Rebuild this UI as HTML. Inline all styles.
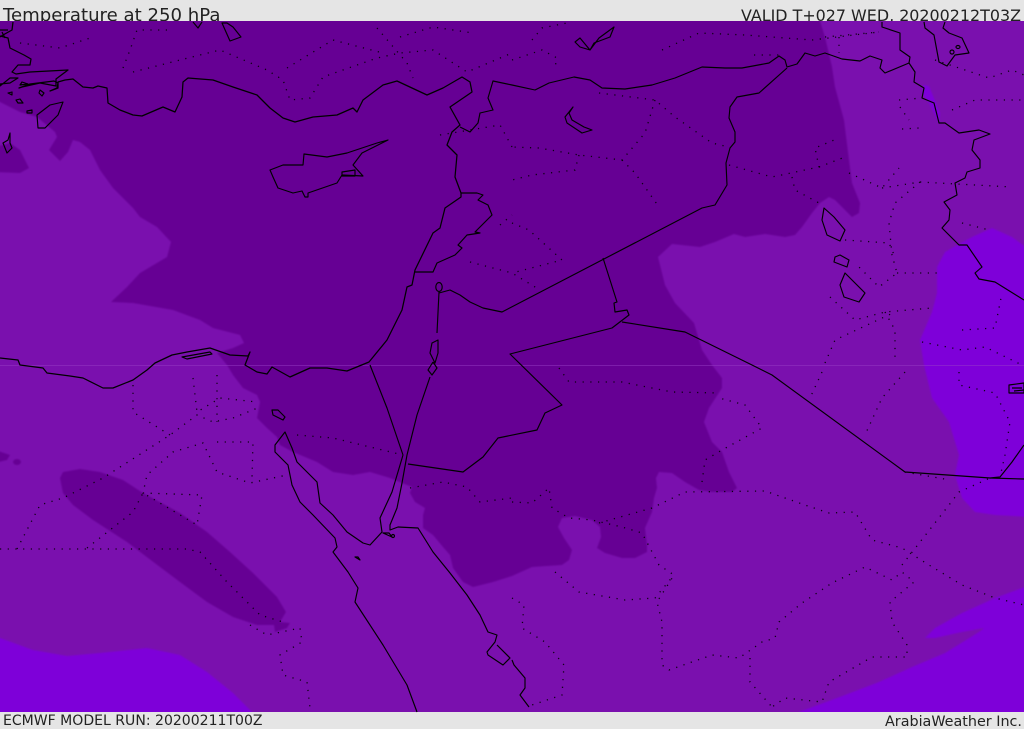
<!DOCTYPE html>
<html><head><meta charset="utf-8"><title>Temperature at 250 hPa</title>
<style>html,body{margin:0;padding:0;background:#e5e5e5;width:1024px;height:729px;overflow:hidden}svg{display:block}</style></head>
<body>
<svg width="1024" height="729" viewBox="0 0 1024 729" xmlns="http://www.w3.org/2000/svg" font-family="'DejaVu Sans',sans-serif" fill="#222">
<defs>
<clipPath id="m"><rect x="0" y="21" width="1024" height="691"/></clipPath>
<filter id="s" x="-2%" y="-2%" width="104%" height="104%"><feGaussianBlur stdDeviation="0.9"/></filter>
</defs>
<rect width="1024" height="729" fill="#e5e5e5"/>
<text x="3" y="21" font-size="18" textLength="217.5" lengthAdjust="spacingAndGlyphs">Temperature at 250 hPa</text>
<text x="741" y="21" font-size="16" textLength="280" lengthAdjust="spacingAndGlyphs">VALID T+027 WED, 20200212T03Z</text>
<text x="3" y="725" font-size="14" textLength="259.5" lengthAdjust="spacingAndGlyphs">ECMWF MODEL RUN: 20200211T00Z</text>
<text x="885" y="726" font-size="14" textLength="137" lengthAdjust="spacingAndGlyphs">ArabiaWeather Inc.</text>

<rect x="0" y="21" width="1024" height="691" fill="#7a10ae"/>
<g clip-path="url(#m)"><g filter="url(#s)">
<!-- dark contour -->
<path fill="#660094" stroke-linejoin="round" d="M-5,10 L820,10 820,21 825,37 832,67 835,87 844,120 849,160 852,183 860,203 859,213 852,217 845,210 835,200 829,197 820,203 812,213 802,227 795,235 785,237 765,234 745,237 734,234 715,242 700,247 672,244 658,257 665,285 675,303 694,323 702,350 712,365 722,378 722,388 709,408 704,422 712,442 722,452 729,472 737,488 732,492 712,492 699,490 685,482 672,473 659,472 656,478 657,488 654,498 652,512 645,528 647,545 647,552 635,558 622,558 605,553 597,548 601,537 600,527 592,520 575,516 562,518 558,527 564,538 572,550 569,560 562,565 532,567 512,576 493,582 473,587 463,582 453,568 450,555 443,547 433,535 423,528 423,515 425,508 415,502 410,493 412,487 402,483 390,478 370,472 353,475 333,472 317,462 293,452 280,445 277,437 267,428 257,418 260,402 257,395 243,388 233,375 227,365 217,353 233,348 244,343 240,335 213,328 200,320 173,310 133,303 111,302 127,287 140,273 167,257 171,242 157,227 140,217 133,208 113,188 100,170 90,150 80,142 73,140 68,152 60,161 49,150 57,137 55,132 37,117 20,112 0,102 -5,100 Z"/>
<path fill="#660094" d="M-5,172 L20,173 29,168 20,150 10,143 -5,147 Z"/>
<path fill="#660094" d="M60,478 63,472 80,469 100,472 123,480 143,493 180,513 207,532 230,552 253,573 277,597 286,612 280,622 290,623 287,628 275,632 274,625 257,625 233,617 207,602 180,582 160,567 127,542 93,520 73,505 63,493 Z"/>
<path fill="#660094" d="M-5,450 10,455 7,460 -5,463 Z"/>
<ellipse cx="17" cy="462" rx="4" ry="3" fill="#660094"/>
<!-- bright contours -->
<path fill="#7e00d9" d="M-5,636 0,638 33,650 67,656 100,653 147,648 180,655 207,672 233,693 252,712 252,720 -5,720 Z"/>
<path fill="#7e00d9" d="M799,712 845,695 879,682 912,667 945,653 979,632 984,628 962,632 935,638 925,638 935,628 962,613 995,598 1030,585 1030,720 799,720 Z"/>
<path fill="#7e00d9" d="M992,228 972,237 945,252 937,267 937,293 932,312 920,340 924,365 932,398 949,422 959,455 955,475 962,498 975,512 995,515 1030,517 1030,250 1012,237 Z"/>
<path fill="#7e00d9" d="M924,85 929,86 940,113 939,123 929,103 922,93 Z"/>
</g></g>
<line x1="0" y1="365.5" x2="1024" y2="365.5" stroke="#9a40c8" stroke-opacity=".45"/>

<!-- dotted regional borders -->
<g fill="none" stroke="#000" stroke-width="1.3" stroke-dasharray="1.2 6.5" stroke-opacity=".9">
<path d="M512,502 532,503 549,488 552,508 569,518 592,520 622,527 642,533 659,565 674,575 657,602 662,622 662,665 669,670 712,655 739,658 762,642 775,638 779,622 802,603 832,583 865,567 892,580 902,572 914,582 890,602 892,622 907,645 907,657 872,657 829,682 822,702 785,698 772,707"/>
<path d="M750,658 750,682 772,707"/>
<path d="M599,523 652,508 685,492 765,491 805,505 829,513 855,512 872,540 902,548 929,565 962,585 995,598 1024,605"/>
<path d="M902,565 949,505 959,492 990,478"/>
<path d="M555,572 579,592 625,600 655,598 674,575"/>
<path d="M512,598 524,605 522,628 545,642 564,665 562,695 532,705"/>
<path d="M702,482 705,460 722,450 762,428 745,405 719,398"/>
<path d="M559,368 569,382 622,382 672,392 719,393"/>
<path d="M822,372 810,398"/>
<path d="M905,372 882,398 865,435"/>
<path d="M959,372 959,385 995,393 1010,422 1005,455 1000,477"/>
<path d="M0,549 187,549 200,552 227,582 260,615 283,622"/>
<path d="M17,549 40,505 63,498 103,478 170,435 197,415 213,422 233,418 260,407"/>
<path d="M87,548 133,512 143,493 197,525 202,495 143,493 147,475 173,452 203,443 217,472 250,483 287,475"/>
<path d="M217,442 253,442 252,478"/>
<path d="M133,385 133,412 170,435"/>
<path d="M193,378 197,412 220,398 257,402"/>
<path d="M217,375 217,422"/>
<path d="M250,625 267,635 300,628 302,642 280,655 283,675 307,682 310,708"/>
<path d="M297,435 333,438 403,455"/>
<path d="M410,488 443,482 467,487 480,502 512,498"/>
<path d="M20,43 60,48 90,38"/>
<path d="M123,68 130,50 137,30 173,30"/>
<path d="M133,72 180,60 220,50 267,70 283,80 290,100 310,98 323,77 377,58 400,53 433,50 467,72 512,53"/>
<path d="M287,68 333,40 383,53"/>
<path d="M377,28 407,63 413,78"/>
<path d="M400,37 433,27 473,33"/>
<path d="M512,60 542,50 557,58 555,67"/>
<path d="M532,40 542,28 572,22"/>
<path d="M662,50 699,33 745,35 812,40 879,32"/>
<path d="M754,55 779,55"/>
<path d="M599,93 655,100 675,117 712,143 729,147"/>
<path d="M655,100 645,133 622,160 579,155 539,148 512,147"/>
<path d="M622,160 635,173 659,207"/>
<path d="M579,155 575,170 532,175 512,180"/>
<path d="M729,165 772,177 819,167 815,148 839,138"/>
<path d="M819,167 845,157"/>
<path d="M792,177 795,190 819,203"/>
<path d="M512,223 529,230 562,260 512,273"/>
<path d="M440,135 500,125 512,147"/>
<path d="M500,225 512,215"/>
<path d="M470,262 512,273 540,290"/>
<path d="M825,37 879,32"/>
<path d="M839,37 839,53"/>
<path d="M899,100 922,98"/>
<path d="M902,129 919,128"/>
<path d="M900,107 909,120"/>
<path d="M952,110 975,100 1024,100"/>
<path d="M935,60 989,78 1012,70 1024,75"/>
<path d="M849,173 882,188 899,168"/>
<path d="M882,188 920,182 1012,187"/>
<path d="M920,182 895,203 889,223 892,255 897,273 879,287 859,267"/>
<path d="M897,273 942,273"/>
<path d="M962,223 989,230"/>
<path d="M830,297 855,320 885,312 932,308"/>
<path d="M885,312 895,330 895,363"/>
<path d="M845,240 889,243 895,257"/>
<path d="M922,342 962,350 985,347 1022,365"/>
<path d="M962,330 995,328 1002,293"/>
<path d="M825,363 835,340 895,312"/>
<path d="M905,472 950,480"/>
</g>

<!-- solid coasts & borders -->
<g fill="none" stroke="#000" stroke-width="1.15" stroke-linejoin="round">
<path stroke-width="1.25" d="M13,22 12,30 3,35 0,37 M0,36 8,38 10,48 18,52 24,55 31,59 30,65 18,65 12,72 16,74 30,72 68,70 60,76 56,79 56,86 40,83 22,87 19,88 30,84 54,81 58,83 57,88 50,91 58,88 58,82 65,80 73,79 83,87 93,88 98,86 107,88 108,103 120,110 133,115 142,116 163,107 175,112 182,97 183,82 188,78 213,80 233,87 257,95 270,108 283,118 295,122 313,117 337,115 353,108 357,112 363,100 383,85 397,81 427,95 443,88 462,77 470,82 472,92 450,107 460,125 452,132 447,145 457,155 455,177 461,193 461,197 445,208 440,228 433,233 415,270 412,285 407,287 402,310 387,340 369,362 347,371 327,368 310,368 290,377 272,367 267,374 257,372 245,365 250,352 248,356 230,355 210,348 187,352 172,355 155,363 147,370 133,380 113,388 103,388 83,378 70,376 47,373 43,368 20,365 18,360 0,358"/>
<path d="M182,357 210,352 212,354 187,359 Z"/>
<path d="M0,86 10,78 18,78 10,83 0,84 Z"/>
<path d="M20,85 22,82 28,84 Z M8,93 12,92 12,95 Z M40,90 44,93 42,96 39,93 Z M16,100 20,99 23,103 18,103 Z M27,111 32,110 32,113 27,113 Z"/>
<path d="M0,30 8,30 M2,32 5,38"/>
<path d="M63,102 50,105 37,115 38,128 45,128 58,115 Z"/>
<path d="M10,133 8,140 3,143 7,153 12,148 10,143 Z"/>
<path d="M193,22 198,28 202,22 M222,23 230,41 241,37 233,27 227,23 Z"/>
<path d="M270,170 273,177 278,188 293,193 302,191 305,197 308,197 308,193 337,183 342,175 363,176 353,165 362,153 388,140 377,143 347,153 327,157 304,154 303,165 283,165 Z"/>
<path d="M342,172 355,170 355,176 342,176 Z"/>
<!-- Levant -->
<path d="M461,193 477,193 483,195 478,200 488,205 492,215 475,232 480,233 467,235 458,245 462,248 455,255 437,263 433,272 415,272"/>
<ellipse cx="439" cy="287" rx="3.2" ry="4.5"/>
<path d="M439,292 437,333 M430,353 432,343 438,340 438,353 435,363 Z"/>
<path d="M433,362 428,370 432,375 437,368 433,362 M430,377 417,415 407,455 402,483 397,508 390,525 390,530 398,527 418,528 433,552 450,573 467,595 480,615 488,632 497,635 495,642 487,652 488,655 503,665 510,658 497,645"/>
<path d="M403,455 392,492 380,518 382,532 370,545 363,543 347,532 333,515 320,503 317,482 297,462 292,448 285,432 275,445 275,452 288,465 292,485 300,502 313,515 335,538 337,547 333,552 348,572 358,588 355,602 383,645 407,685 417,712"/>
<path d="M512,660 514,665 525,678 525,688 520,695 529,707"/>
<path d="M272,410 273,415 283,420 285,417 278,410 Z M383,533 392,537 389,533 Z M355,557 360,560 358,557 Z"/>
<circle cx="393" cy="536" r="1.5"/>
<!-- borders -->
<path d="M370,365 387,408 403,455"/>
<path d="M408,464 463,472 483,457 498,438 537,430 545,413 562,405 510,354 612,328 629,315 627,310 615,312 614,303 617,302 603,258"/>
<path d="M439,293 450,290 460,295 470,302 483,308 502,312 702,208 715,205 727,185 726,163 730,148 735,142 735,132 729,118 730,107 737,97 759,93 787,68"/>
<path d="M622,322 685,332 752,365 772,375 905,472 990,478 1024,479"/>
<path d="M990,478 1000,477 1012,462 1024,445"/>
<path d="M460,127 470,132 478,123 480,113 493,110 488,98 493,81 512,85 535,90 549,83 574,77 590,80 602,88 625,89 652,85 675,78 702,67 725,68 742,68 769,63 779,56 785,60 787,67 797,64 805,53 815,56 825,53 842,59 860,61 870,56 882,60 880,68 885,73 909,63"/>
<path d="M882,22 882,27 900,33 900,50 910,57 909,63 915,72 914,82 924,88 922,98 934,103 939,123 945,123 959,133 979,130 990,134 974,140 972,150 980,160 980,168 967,172 965,178 955,183 957,195 944,202 950,210 949,220 942,228 959,245 967,245 982,267 975,273 979,279 995,282 1024,300"/>
<path d="M924,22 925,28 934,35 939,62 947,66 955,55 969,53 962,38 949,33 943,28 945,22"/>
<ellipse cx="952" cy="52" rx="2" ry="2"/><ellipse cx="958" cy="47" rx="2" ry="1.5"/>
<!-- lakes -->
<path d="M575,42 580,38 590,50 599,38 614,27 610,37 594,43 590,50 580,47 Z"/>
<path d="M573,107 565,117 567,123 582,133 592,130 584,127 572,120 569,113 Z"/>
<path d="M824,208 822,220 827,235 840,241 845,230 834,217 Z"/>
<path d="M835,257 840,255 849,260 847,267 834,262 Z"/>
<path d="M845,273 840,285 844,297 859,302 865,293 852,280 Z"/>
<path d="M1009,385 1024,383 1024,393 1009,393 Z"/>
<path d="M1012,388 1022,388 M1014,391 1024,390"/>
</g>
</svg>
</body></html>
